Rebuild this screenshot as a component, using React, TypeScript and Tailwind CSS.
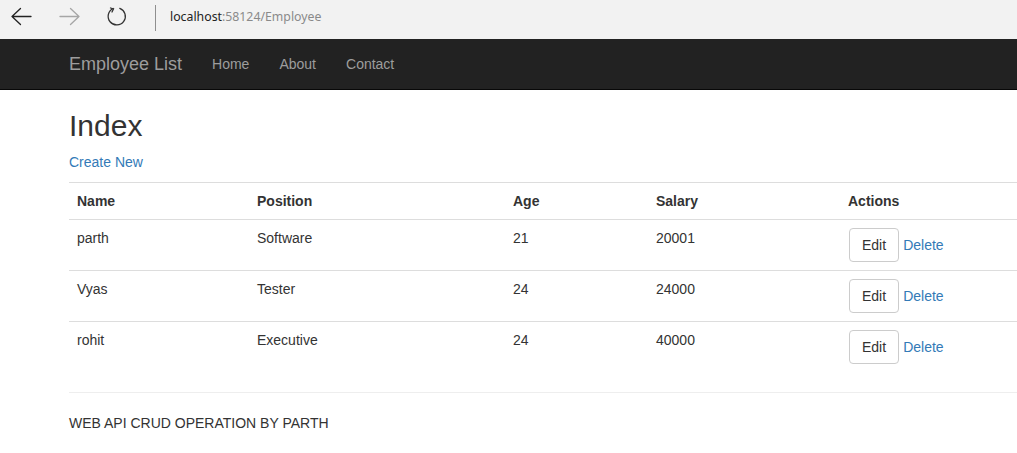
import React from "react";

const rows = [
  { name: "parth", position: "Software", age: "21", salary: "20001" },
  { name: "Vyas", position: "Tester", age: "24", salary: "24000" },
  { name: "rohit", position: "Executive", age: "24", salary: "40000" },
];

export default function App() {
  return (
    <div className="w-[1017px] h-[453px] overflow-hidden bg-white text-[14px] leading-[20px] text-[#333]" style={{ fontFamily: '"Liberation Sans", Arial, sans-serif' }}>
      {/* Browser chrome */}
      <div className="h-[39px] bg-[#f2f2f2] flex items-center">
        <svg width="140" height="39" viewBox="0 0 140 39" className="shrink-0">
          <g fill="none" strokeWidth="1.3" strokeLinecap="round">
            <path d="M12 16.5 H31 M12 16.5 L20.5 8.5 M12 16.5 L20.5 24.5" stroke="#222" />
            <path d="M60 16.5 H79 M79 16.5 L70.5 8.5 M79 16.5 L70.5 24.5" stroke="#a6a6a6" />
            <path d="M113.2 8.5 A 8.6 8.6 0 1 0 119.8 8.3" stroke="#333" />
            <path d="M110.5 8 L113.5 9 L112 12" stroke="#333" />
          </g>
        </svg>
        <div className="w-px h-[26px] bg-[#8f8f8f] ml-[15px] mb-[4px]" />
        <div className="ml-[14px] mb-[6px] text-[12.3px]" style={{ fontFamily: '"Noto Sans", "Open Sans", sans-serif' }}>
          <span className="text-[#222]">localhost</span>
          <span className="text-[#8a8a8a]">:58124/Employee</span>
        </div>
      </div>

      {/* Navbar */}
      <div className="h-[51px] bg-[#222] border-b border-[#080808] pl-[54px] flex">
        <div className="px-[15px] py-[15px] text-[18px] leading-[20px] text-[#9d9d9d]">Employee List</div>
        <div className="px-[15px] py-[15px] text-[#9d9d9d]">Home</div>
        <div className="px-[15px] py-[15px] text-[#9d9d9d]">About</div>
        <div className="px-[15px] py-[15px] text-[#9d9d9d]">Contact</div>
      </div>

      {/* Content */}
      <div className="pl-[69px] w-[1209px]">
        <h2 className="mt-[19px] mb-[10px] text-[30px] leading-[33px] font-normal">Index</h2>
        <p className="mb-[10px]">
          <span className="text-[#337ab7]">Create New</span>
        </p>
        <table className="w-[1140px] border-collapse mb-[20px]">
          <tbody>
            <tr>
              <th className="w-[180px] text-left font-bold p-[8px] border-t border-[#ddd] align-top">Name</th>
              <th className="w-[256px] text-left font-bold p-[8px] border-t border-[#ddd] align-top">Position</th>
              <th className="w-[143px] text-left font-bold p-[8px] border-t border-[#ddd] align-top">Age</th>
              <th className="w-[192px] text-left font-bold p-[8px] border-t border-[#ddd] align-top">Salary</th>
              <th className="text-left font-bold p-[8px] border-t border-[#ddd] align-top">Actions</th>
            </tr>
            {rows.map((r) => (
              <tr key={r.name}>
                <td className="p-[8px] border-t border-[#ddd] align-top">{r.name}</td>
                <td className="p-[8px] border-t border-[#ddd] align-top">{r.position}</td>
                <td className="p-[8px] border-t border-[#ddd] align-top">{r.age}</td>
                <td className="p-[8px] border-t border-[#ddd] align-top">{r.salary}</td>
                <td className="p-[8px] border-t border-[#ddd] align-top">
                  <div className="flex items-baseline gap-[4px] pl-[1px]">
                    <span className="inline-block px-[12px] py-[6px] border border-[#ccc] rounded-[4px] bg-white text-[#333] leading-[20px]">Edit</span>
                    <span className="text-[#337ab7]">Delete</span>
                  </div>
                </td>
              </tr>
            ))}
          </tbody>
        </table>
        <hr className="border-0 border-t border-[#eee] my-[20px]" />
        <p>WEB API CRUD OPERATION BY PARTH</p>
      </div>
    </div>
  );
}
